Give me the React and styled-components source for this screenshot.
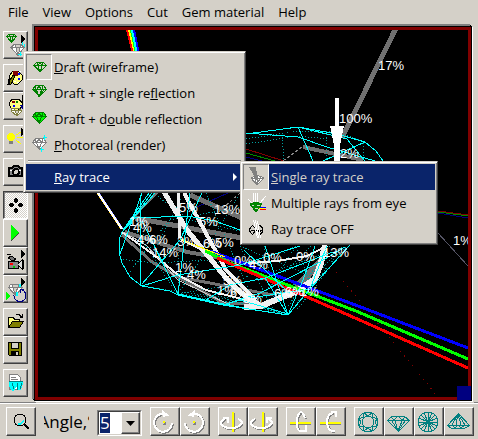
import React, { useState } from "react";
import styled, { createGlobalStyle, css } from "styled-components";

const GlobalStyle = createGlobalStyle`
  * {
    box-sizing: border-box;
  }

  body {
    margin: 0;
    background: #d4d0c8;
    color: #000;
    font-family: "Open Sans", "Noto Sans", sans-serif;
    font-size: 13px;
  }

  button, select {
    font: inherit;
    color: inherit;
  }
`;

const MENUS = ["File", "View", "Options", "Cut", "Gem material", "Help"];

const TOOL_GROUPS = [
  [{ icon: "render", label: "Render mode" }],
  [
    { icon: "palette", label: "Colors" },
    { icon: "gemPalette", label: "Gem colors" },
  ],
  [{ icon: "light", label: "Lighting" }],
  [{ icon: "camera", label: "Snapshot" }],
  [
    { icon: "move", label: "Move", pressed: true },
    { icon: "play", label: "Play" },
    { icon: "video", label: "Record" },
    { icon: "spin", label: "Spin gem" },
  ],
  [
    { icon: "open", label: "Open" },
    { icon: "save", label: "Save" },
  ],
  [{ icon: "report", label: "Report" }],
];

const VIEW_GROUPS = [
  [
    { icon: "turnRight", label: "Rotate clockwise" },
    { icon: "turnLeft", label: "Rotate counterclockwise" },
  ],
  [
    { icon: "yawLeft", label: "Turn left" },
    { icon: "yawRight", label: "Turn right" },
  ],
  [
    { icon: "pitchDown", label: "Tilt down" },
    { icon: "pitchUp", label: "Tilt up" },
  ],
  [
    { icon: "crown", label: "Crown view" },
    { icon: "side", label: "Side view" },
    { icon: "pavilion", label: "Pavilion view" },
    { icon: "sideUp", label: "Inverted side view" },
  ],
];

const LABELS = [
  [378, 70, "17%"],
  [339, 123, "100%"],
  [340, 158, "2%"],
  [453, 245, "1%"],
  [179, 212, "5%"],
  [214, 214, "13%"],
  [199, 226, "5%"],
  [129, 226, "1%"],
  [133, 232, "4%"],
  [137, 244, "4%"],
  [149, 244, "6%"],
  [177, 246, "3%"],
  [203, 248, "6%"],
  [215, 247, "5%"],
  [152, 257, "14%"],
  [175, 272, "1%"],
  [187, 279, "4%"],
  [234, 265, "0%"],
  [249, 269, "4%"],
  [263, 262, "0%"],
  [296, 261, "0%"],
  [323, 257, "13%"],
  [223, 285, "5%"],
  [217, 295, "1%"],
  [230, 297, "6%"],
  [243, 303, "5%"],
  [274, 298, "6%"],
  [285, 296, "6%"],
  [300, 296, "1%"],
];

const ICONS = {
  render: (
    <>
      <g stroke="#008000">
        <path d="M6.5 3.5h6l2 2l-5 6l-5-6zM4.5 5.5h10M7.5 3.5l2 8M11.5 3.5l-2 8" />
      </g>
      <g stroke="#808080">
        <path d="M12 13.5h7l3 3l-6 8l-7-8zM9 16.5h13M13 14l3 10l3-10" fill="#fff" />
      </g>
      <path d="M19 4l4 4l-4 4z" fill="#000" />
      <path d="M20.500 11v3M22.500 13v3M16 23.500h4M18.500 21v4" stroke="#0ff" />
    </>
  ),
  palette: (
    <>
      <path d="M7 17v-5l4-5h5l4 4v5l-4 4h-4l-3-3z" fill="#ffff80" stroke="#000" />
      <path d="M11 7h4v4h-3z" fill="#800000" stroke="#800000" />
      <path d="M6 20l5-9l2 1l-4 8z" fill="#808000" stroke="#000" />
      <path d="M6 15h2v5h-2z" fill="#000" />
      <path d="M16 9h2v2h-2zM16 14h2v2h-2z" fill="#00f" />
      <path d="M17 7.500h2M12 17.500h2M15 18.500h2" stroke="#fff" />
    </>
  ),
  gemPalette: (
    <>
      <path d="M7 12l3-5h7l3 4v4l-4 3h-6z" fill="#ffff80" stroke="#000" />
      <path d="M10 16h7l3 3l-5 5l-6-5zM9 18.500h11M12 16l3 8l3-8" fill="#fff" stroke="#808040" />
      <path d="M10 9h3v2h-3z" fill="#800000" />
      <path d="M14 9h2v2h-2z" fill="#080" />
      <path d="M11 13h2v2h-2z" fill="#00f" />
      <path d="M18 13h5v6z" fill="#000080" stroke="#000080" />
      <path d="M20 3l4 4l-4 4z" fill="#000" />
    </>
  ),
  light: (
    <>
      <circle cx="9" cy="12" r="4" fill="#ff0" />
      <path d="M7 16h4v3h-4z" fill="#808080" />
      <path d="M14 10l5-3M15 12.500h6M14 15l5 4" stroke="#ff0" />
      <path d="M19 3l4 4l-4 4z" fill="#000" />
    </>
  ),
  camera: (
    <>
      <path d="M7 10h3l2-2h4l2 2h2v8h-13z" fill="#888" stroke="#000" strokeWidth="2" />
      <circle cx="14" cy="14" r="3" fill="#d4d0c8" stroke="#000" strokeWidth="2" />
      <path d="M8 12.500h2M17 12.500h2" stroke="#fff" />
    </>
  ),
  move: (
    <g fill="#000">
      <path d="M13 7h2v1h1v3h-1v1h-2v-1h-1v-3h1z" />
      <path d="M13 17h2v1h1v3h-1v1h-2v-1h-1v-3h1z" />
      <path d="M7 13h1v-1h3v1h1v2h-1v1h-3v-1h-1z" />
      <path d="M16 13h1v-1h3v1h1v2h-1v1h-3v-1h-1z" />
    </g>
  ),
  play: (
    <>
      <path d="M9 6l8 8l-8 8z" fill="#0f0" />
      <path d="M17 14l-8 8" stroke="#444" />
    </>
  ),
  video: (
    <>
      <path d="M6.500 14.500h10v7h-10z" fill="#888" stroke="#000" />
      <path d="M6 11l3-2l5 3l-3 2zM5 8l4-1" fill="#777" stroke="#000" />
      <path d="M16 17l4-4v9l-4-4M21.500 13v9" stroke="#000" fill="#ddd" />
      <path d="M8 17h3" stroke="#f00" strokeWidth="2" />
      <path d="M11 20h2" stroke="#0c0" strokeWidth="2" />
      <path d="M19 3l4 4l-4 4z" fill="#000" />
    </>
  ),
  spin: (
    <>
      <path d="M8.500 9.500h9l3 3l-7 8l-7-8zM6 12.500h14M10 9l3 11l4-11" fill="#fff" stroke="#808080" />
      <path d="M4 17l4 4l-4 4z" fill="#0f0" />
      <path d="M20 15a6 6 0 1 1-8 5M18 14.500h4M18.500 14v4" stroke="#000080" />
      <path d="M18 9v3M15 17v4" stroke="#0ff" strokeWidth="2" />
      <path d="M19 3l4 4l-4 4z" fill="#000" />
    </>
  ),
  open: (
    <>
      <path d="M6.500 18.500v-9h5l1 2h5v3" fill="#ffff80" stroke="#000" />
      <path d="M6.500 19.500l4-6h11l-4 6z" fill="#808000" stroke="#000" />
      <path d="M14 6.500h3l3 3M20.500 6v4M18 9.500h3" stroke="#000" />
    </>
  ),
  save: (
    <>
      <path d="M6.500 6.500h13v13h-12l-1-1z" fill="#808000" stroke="#000" />
      <path d="M9.500 6.500h7v6h-7z" fill="#d4d0c8" stroke="#000" />
      <path d="M9 15h8v4h-8z" fill="#000" />
      <path d="M14 16h2v3h-2z" fill="#d4d0c8" />
    </>
  ),
  report: (
    <>
      <path d="M7.500 5.500h8l3 3v12h-11z" fill="#fff" stroke="#808080" />
      <path d="M9 8.500h5M9 10.500h7" stroke="#808080" />
      <path d="M7 12h14v3l-2 6h-3l-1-4l-3 5h-2l-3-5z" fill="#0ff" />
      <path d="M7 12.500h14M10 14l2 6M15 14l1 7M20 14l-2 6" stroke="#008080" />
    </>
  ),
  zoom: (
    <>
      <circle cx="13" cy="11" r="6" fill="#d4d0c8" stroke="#000" />
      <path d="M11 14.500h3l3-3" stroke="#0ff" strokeWidth="2" />
      <path d="M17 15l5 5" stroke="#000" strokeWidth="2" />
    </>
  ),
  turnRight: (
    <>
      <path d="M12 6a9 9 0 1 0 11 9" stroke="#808080" strokeWidth="2" />
      <path d="M11 5a9 9 0 1 0 11 9M9 5h7M12 2l5 4l-4 1" stroke="#fff" strokeWidth="2" />
      <path d="M14 13h2v3h-3v-1h1z" fill="#808080" />
      <path d="M13 12h2v2h-2z" fill="#ff0" />
    </>
  ),
  turnLeft: (
    <>
      <path d="M17 6a9 9 0 1 1-11 9" stroke="#808080" strokeWidth="2" />
      <path d="M16 5a9 9 0 1 1-11 9M18 5h-7M15 2l-5 4l4 1" stroke="#fff" strokeWidth="2" />
      <path d="M14 13h2v3h-3v-1h1z" fill="#808080" />
      <path d="M13 12h2v2h-2z" fill="#ff0" />
    </>
  ),
  yawLeft: (
    <>
      <path d="M8 11q-8 4 0 8q6 3 14-1q5-4 0-7M16 4v19" stroke="#808080" strokeWidth="2" />
      <path d="M15 3v20" stroke="#ff0" strokeWidth="2" />
      <path d="M7 10q-8 4 0 8q7 3 14-1q6-4-1-7M5 9h5v5" stroke="#fff" strokeWidth="2" />
      <path d="M15 3v13" stroke="#ff0" strokeWidth="2" />
    </>
  ),
  yawRight: (
    <>
      <path d="M8 11q-8 4 0 8q6 3 14-1q5-4 0-7M16 4v19" stroke="#808080" strokeWidth="2" />
      <path d="M15 3v20" stroke="#ff0" strokeWidth="2" />
      <path d="M7 10q-8 4 0 8q7 3 14-1q6-4-1-7M24 9h-5v5" stroke="#fff" strokeWidth="2" />
      <path d="M15 3v13" stroke="#ff0" strokeWidth="2" />
    </>
  ),
  pitchDown: (
    <>
      <path d="M4 15h21M20 10q-4-10-8 0v8q2 6 6 4" stroke="#808080" strokeWidth="2" />
      <path d="M4 14h21" stroke="#ff0" strokeWidth="2" />
      <path d="M19 9q-4-12-8 0v9q2 6 6 4M20 16v6h-5" stroke="#fff" strokeWidth="2" />
      <path d="M13 14h12" stroke="#ff0" strokeWidth="2" />
    </>
  ),
  pitchUp: (
    <>
      <path d="M4 15h21M18 5q-6 0-6 10q1 8 7 8" stroke="#808080" strokeWidth="2" />
      <path d="M4 14h21" stroke="#ff0" strokeWidth="2" />
      <path d="M17 4q-6 1-6 10q1 9 8 8M15 3h5v5" stroke="#fff" strokeWidth="2" />
      <path d="M13 14h12" stroke="#ff0" strokeWidth="2" />
    </>
  ),
  crown: (
    <g stroke="#008080">
      <circle cx="14" cy="13" r="10" />
      <circle cx="14" cy="13" r="6" />
      <path d="M10 4l4 3l4-3l1 4l4 2l-2 3l2 4l-4 1l-1 4l-4-3l-4 3l-1-4l-4-1l2-4l-2-3l4-2z" />
    </g>
  ),
  side: (
    <g stroke="#008080">
      <path d="M7.500 7.500h13l5 4l-11 11l-11-11zM3 11.500h22M7 8l4 4l3 10l4-10l3-4M10 11l4-4l4 4M8 12l6 10l7-10" />
    </g>
  ),
  pavilion: (
    <g stroke="#008080">
      <circle cx="14" cy="13" r="10" />
      <path d="M14.500 3v20M4 13.500h20M7 6l14 14M21 6l-14 14M10 4l8 18M18 4l-8 18M5 9l18 8M23 9l-18 8" />
    </g>
  ),
  sideUp: (
    <g stroke="#008080">
      <path d="M14.500 4.500l11 12l-5 3h-13l-4-3zM3 16.500h22M14 5l-6 11M14 5l-2 11M14 5l3 11M14 5l7 11M8 16l3 3l3-3l3 3l4-3" />
    </g>
  ),
  wire: <path d="M9.500 7.500h7l3 3l-6.500 6l-6-6zM7 10.500h12M10 8l3 9l3-9M11 10l2-2l2 2" stroke="#008000" />,
  single: (
    <path
      d="M9.500 5.500h8l3 4l-7 7l-7-7zM6 9.500h14M9 6l4 11l4-11M11 9l2-3l2 3M8 9l5 7l6-7"
      stroke="#008000"
    />
  ),
  double: (
    <>
      <path d="M9.500 6.500h8l3 4l-7 7l-7-7z" fill="#0f0" stroke="#008000" />
      <path d="M6 10.500h14M9 7l4 10l4-10M11 10l2-3l2 3" stroke="#008000" />
    </>
  ),
  photo: (
    <>
      <path d="M9.500 6.500h8l3 4l-7 7l-7-7z" fill="#fff" stroke="#808080" />
      <path d="M6 10.500h14M9 7l4 10l4-10M11 10l2-3l2 3" stroke="#808080" />
      <path d="M17 5.500h4M18.500 3v5M14 17.500h4M15.500 15v5" stroke="#0ff" />
    </>
  ),
  oneRay: (
    <>
      <path d="M7 13l6-3l7 3l-7 7z" fill="#fff" stroke="#808080" />
      <path d="M7 13.500h13M10 12l3 7l4-7M13.500 10v10" stroke="#808080" />
      <path d="M5 2h7l2 15z" fill="#808080" />
    </>
  ),
  manyRays: (
    <>
      <path d="M10.500 3v9M12.500 3v9M14.500 3v9M23 6l-6 7M5 9l4 4" stroke="#fff" />
      <path d="M7 14l6-2l6 2l-6 8z" fill="#080" stroke="#008000" />
      <path d="M9 15.500h2M14 15.500h3M12 18.500h3" stroke="#d4d0c8" />
      <path d="M17 17.500h6" stroke="#00f" />
      <path d="M17 19.500h6" stroke="#f00" />
      <path d="M16 18.500h6" stroke="#ff0" />
    </>
  ),
  noRays: (
    <>
      <path d="M10 9q-7 5 0 10M16 9q8 5 0 10M8 14.500h11M10 10l3 3M10 18l3-4l5 2" stroke="#000" />
      <path d="M10.500 4l4 18M12.500 4l3 18M14.500 5l3 17" stroke="#fff" />
    </>
  ),
};

const Icon = ({ name, x = 0, y = 0, width = 26, height = 26 }) => (
  <Glyph width={width} height={height} viewBox={`${x} ${y} ${width} ${height}`} aria-hidden="true">
    {ICONS[name]}
  </Glyph>
);

const GemScene = () => (
  <Scene viewBox="38 30 430 367" preserveAspectRatio="xMinYMin meet" role="img" aria-label="Gem ray trace">
    <g strokeWidth="2">
      <path d="M127 30L133 54" stroke="#f00" />
      <path d="M129 30L135 54" stroke="#ff0" />
      <path d="M131 30L136 54" stroke="#0f0" />
      <path d="M132 30L137 54" stroke="#0ff" />
      <path d="M134 30L139 54" stroke="#00f" />
    </g>
    <path d="M97 193L121 229" stroke="#fc0" />
    <path d="M99 193L123 229" stroke="#66f" />
    <path d="M98 193L122 229" stroke="#fff" strokeWidth="2" />

    <g>
      <path d="M246 149L284 161M438 211L468 215" stroke="#800000" />
      <path d="M246 153L275 161M438 212L468 216" stroke="#080" />
      <path d="M246 157L262 161M438 213L468 218" stroke="#000080" />
      <path d="M438 233L468 266" stroke="#556" />
      <path d="M336 272L438 397" stroke="#800000" strokeDasharray="1 5" />
      <path d="M302 147L283 161M240 193L215 215" stroke="#888" strokeDasharray="3 2" />
      <path d="M190 210L228 193" stroke="#000080" />
    </g>

    <g stroke="#707070" strokeWidth="5">
      <path d="M396 28L342 138" />
      <path d="M303 147L363 160" strokeWidth="4" />
      <path d="M190 195L242 218M135 218L242 238" />
      <path d="M125 232L187 252L240 261" strokeWidth="4" />
      <path d="M178 277L273 295" strokeWidth="3" />
      <path d="M122 235L152 262L223 303L262 304" strokeWidth="3" />
      <path d="M297 287L322 260" strokeWidth="7" />
      <path d="M125 228L144 206L157 193" strokeWidth="2" />
    </g>

    <g stroke="#00a0a0" strokeDasharray="1 2">
      <path d="M246 139L298 131L337 132L362 141M246 144L298 136L328 139M282 137L284 161M327 134L326 161M364 143L363 161" />
      <path d="M120 259L155 263L209 260L262 275L330 252M135 218L153 253L184 193M153 193L190 220L240 231M177 295L195 268L240 193" />
      <path d="M223 304L251 272L296 246L312 286M178 295L178 193M206 193L256 307L296 246M240 246L274 311M330 246L284 312M311 246L249 308M342 247L303 289" />
      <path d="M128 274L169 220L240 207M180 238L265 280L305 297M144 286L180 292L240 299L288 314" />
      <path d="M264 246L274 297L325 265M240 246L320 280M137 232L177 294L230 285" />
      <path d="M180 294L226 299L280 313M190 297L240 303L285 314M340 252L292 309M346 247L296 311" />
    </g>

    <g stroke="#f0f0f0">
      <path d="M164 192L187 230L226 278L257 308" strokeWidth="5" />
      <path d="M184 193L226 270L256 300" strokeWidth="4" />
      <path d="M178 193L180 238" strokeWidth="3" />
      <path d="M122 232L154 255L178 275L206 290L250 301" strokeWidth="2" />
      <path d="M123 232L146 245L178 280L230 305" stroke="#ccc" />
      <path d="M244 307L261 306L297 291L315 279L321 263L325 245" strokeWidth="6" />
      <path d="M260 304L240 291L226 278" strokeWidth="3" />
      <path d="M240 264L277 261L307 256L327 246" strokeWidth="2" />
      <path d="M180 239L210 254L235 266" strokeWidth="2" />
    </g>

    <g strokeWidth="3">
      <path d="M210 251L240 262L366 309L468 348" stroke="#00f" />
      <path d="M205 251L230 263L356 311L468 359" stroke="#0f0" />
      <path d="M217 258L337 310L468 368" stroke="#f00" />
    </g>
    <path d="M180 239L225 257" stroke="#ff0" />

    <g stroke="#0ff">
      <path d="M122 232L119 240V252L122 263L130 277L142 286L170 291L178 295L223 305L288 315L310 289L350 245" />
      <path d="M122 232L152 193M123 230L149 193M124 229L155 193M122 232L135 218L187 216L215 221L240 230" />
      <path d="M140 193L141 285M142 284L180 240L202 193M178 295L190 193M142 286L178 275L240 265L300 246" />
      <path d="M120 254L142 193M223 305L260 293L318 263L345 247M288 315L265 246M288 315L303 280L315 246" />
      <path d="M244 250L290 294M142 221L178 294L223 304M250 298L310 289L327 246M178 295L249 309M260 280L333 252" />
      <path d="M246 134L298 127L337 134L365 142L376 151L383 161M246 133L298 137L327 147L375 161M298 127L313 161M365 142L323 161M298 127L347 139L365 161" />
      <path d="M206 300L230 285L265 278L288 315M288 314L240 300L223 305" />
    </g>

    <path d="M337 98V126" stroke="#fff" strokeWidth="4" />
    <path d="M330 126H344L340 145V161H334V145Z" fill="#fff" />

    {LABELS.map(([x, y, text]) => (
      <RayLabel key={`${x}-${y}`} x={x} y={y}>
        {text}
      </RayLabel>
    ))}
  </Scene>
);

const App = () => {
  const [angle, setAngle] = useState("5");

  return (
    <Window>
      <GlobalStyle />
      <MenuBar>
        {MENUS.map((name) => (
          <MenuTitle key={name} type="button">
            {name}
          </MenuTitle>
        ))}
      </MenuBar>

      <Workspace>
        <SideBar>
          {TOOL_GROUPS.map((group) => (
            <SideGroup key={group[0].icon}>
              {group.map((tool) => (
                <ToolButton key={tool.icon} type="button" aria-label={tool.label} $pressed={tool.pressed}>
                  <Icon name={tool.icon} x={2} y={1} />
                </ToolButton>
              ))}
            </SideGroup>
          ))}
        </SideBar>
        <Viewport>
          <GemScene />
          <Corner />
        </Viewport>
      </Workspace>

      <BottomBar>
        <ViewButton type="button" aria-label="Zoom">
          <Icon name="zoom" width={28} />
        </ViewButton>
        <AngleLabel htmlFor="angle">Angle,°</AngleLabel>
        <Combo>
          <AngleSelect id="angle" value={angle} onChange={(event) => setAngle(event.target.value)}>
            <option>1</option>
            <option>5</option>
            <option>15</option>
          </AngleSelect>
          <ComboArrow>
            <svg width="9" height="5" viewBox="0 0 9 5">
              <path d="M0 0h9l-4.500 5z" />
            </svg>
          </ComboArrow>
        </Combo>
        {VIEW_GROUPS.map((group) => (
          <ViewGroup key={group[0].icon}>
            {group.map((view) => (
              <ViewButton key={view.icon} type="button" aria-label={view.label}>
                <Icon name={view.icon} x={1} width={28} />
              </ViewButton>
            ))}
          </ViewGroup>
        ))}
      </BottomBar>

      <RenderMenu role="menu">
        <MenuItem type="button" role="menuitem">
          <IconCell $checked>
            <Icon name="wire" width={24} height={24} />
          </IconCell>
          <span><u>D</u>raft (wireframe)</span>
        </MenuItem>
        <MenuItem type="button" role="menuitem">
          <IconCell>
            <Icon name="single" />
          </IconCell>
          <span>Draft + single re<u>f</u>lection</span>
        </MenuItem>
        <MenuItem type="button" role="menuitem">
          <IconCell>
            <Icon name="double" />
          </IconCell>
          <span>Draft + d<u>o</u>uble reflection</span>
        </MenuItem>
        <MenuItem type="button" role="menuitem">
          <IconCell>
            <Icon name="photo" />
          </IconCell>
          <span><u>P</u>hotoreal (render)</span>
        </MenuItem>
        <Separator />
        <MenuItem type="button" role="menuitem" $active>
          <IconCell />
          <span><u>R</u>ay trace</span>
          <SubArrow width="4" height="8" viewBox="0 0 4 8">
            <path d="M0 0l4 4l-4 4z" fill="#fff" />
          </SubArrow>
        </MenuItem>
      </RenderMenu>

      <TraceMenu role="menu">
        <MenuItem type="button" role="menuitem" $active>
          <IconCell $checked>
            <Icon name="oneRay" width={24} height={24} />
          </IconCell>
          <Dimmed><u>S</u>ingle ray trace</Dimmed>
        </MenuItem>
        <MenuItem type="button" role="menuitem">
          <IconCell>
            <Icon name="manyRays" />
          </IconCell>
          <span>Multiple rays from eye</span>
        </MenuItem>
        <MenuItem type="button" role="menuitem">
          <IconCell>
            <Icon name="noRays" />
          </IconCell>
          <span>Ray trace OFF</span>
        </MenuItem>
      </TraceMenu>
    </Window>
  );
};

const raised = css`
  border: 1px solid;
  border-color: #fff #404040 #404040 #fff;
  box-shadow: inset -1px -1px #808080;
`;

const Window = styled.div`
  position: relative;
  display: flex;
  flex-direction: column;
  min-height: 100vh;
  overflow: hidden;
`;

const MenuBar = styled.nav`
  display: flex;
  height: 23px;
  padding-left: 1px;
`;

const MenuTitle = styled.button`
  border: 0;
  padding: 0 7px;
  background: none;
  line-height: 20px;
  white-space: nowrap;
`;

const Workspace = styled.div`
  flex: 1;
  display: flex;
  padding-right: 4px;
  border-bottom: 1px solid #808080;
`;

const SideBar = styled.div`
  display: flex;
  flex-direction: column;
  gap: 5px;
  width: 32px;
  padding: 8px 3px 5px;
`;

const SideGroup = styled.div`
  display: flex;
  flex-direction: column;
`;

const ToolButton = styled.button`
  ${raised}
  display: block;
  width: 25px;
  height: 28px;
  padding: 0;
  overflow: hidden;
  background: #d4d0c8;

  ${({ $pressed }) =>
    $pressed &&
    css`
      border-color: #404040 #fff #fff #404040;
      box-shadow: inset 1px 1px #808080;
      background: repeating-conic-gradient(#fff 0 25%, #d4d0c8 0 50%) 0 0 / 2px 2px;
    `}
`;

const Glyph = styled.svg`
  display: block;
  flex: none;
  fill: none;
  shape-rendering: crispEdges;
`;

const Viewport = styled.main`
  position: relative;
  flex: 1;
  display: flex;
  border: 3px solid #800000;
  background: #000;
  margin: 4px 3px 2px 3px;
  box-shadow: 0 0 0 1px #000, -2px -2px 0 1px #808080, -1px -1px 0 1px #000, 1px 1px 0 1px #fff,
    2px 2px 0 1px #d4d0c8;
`;

const Scene = styled.svg`
  flex: 1;
  width: 100%;
  min-width: 0;
  fill: none;
  shape-rendering: crispEdges;
`;

const RayLabel = styled.text`
  fill: #fff;
  font-family: "Liberation Sans", Arial, sans-serif;
  font-size: 13px;
`;

const Corner = styled.div`
  position: absolute;
  right: -3px;
  bottom: -3px;
  width: 14px;
  height: 14px;
  background: #000080;
`;

const BottomBar = styled.footer`
  display: flex;
  align-items: flex-start;
  gap: 8px;
  padding: 3px 4px 3px 6px;
  border-top: 1px solid #fff;
`;

const ViewGroup = styled.div`
  display: flex;
`;

const ViewButton = styled.button`
  ${raised}
  width: 30px;
  height: 29px;
  padding: 0;
  background: #d4d0c8;
`;

const AngleLabel = styled.label`
  display: flex;
  justify-content: center;
  width: 45px;
  overflow: hidden;
  font-size: 17px;
  line-height: 30px;
  white-space: nowrap;
`;

const Combo = styled.div`
  position: relative;
  width: 45px;
  height: 26px;
  margin-top: 3px;
  border: 1px solid;
  border-color: #808080 #fff #fff #808080;
`;

const AngleSelect = styled.select`
  appearance: none;
  display: block;
  width: 100%;
  height: 24px;
  padding: 0 1px;
  border: 1px solid;
  border-color: #404040 #d4d0c8 #d4d0c8 #404040;
  border-radius: 0;
  background: linear-gradient(#0a246a, #0a246a) 1px 1px / 10px 20px no-repeat #fff;
  color: #fff;
  font-size: 17px;
  line-height: 20px;
`;

const ComboArrow = styled.span`
  ${raised}
  position: absolute;
  top: 1px;
  right: 1px;
  bottom: 1px;
  width: 19px;
  display: flex;
  align-items: center;
  justify-content: center;
  background: #d4d0c8;
  pointer-events: none;
`;

const Menu = styled.div`
  position: absolute;
  padding: 2px;
  border: 1px solid;
  border-color: #d4d0c8 #404040 #404040 #d4d0c8;
  box-shadow: inset 1px 1px #fff, inset -1px -1px #808080;
  background: #d4d0c8;
`;

const RenderMenu = styled(Menu)`
  top: 51px;
  left: 23px;
  width: 223px;
`;

const TraceMenu = styled(Menu)`
  top: 161px;
  left: 240px;
  width: 198px;
`;

const MenuItem = styled.button`
  display: flex;
  align-items: center;
  gap: 2px;
  width: 100%;
  height: 26px;
  padding: 0;
  border: 0;
  background: ${({ $active }) => ($active ? "#0a246a" : "none")};
  color: ${({ $active }) => ($active ? "#fff" : "#000")};
  text-align: left;
  white-space: nowrap;
`;

const IconCell = styled.span`
  display: flex;
  flex: none;
  width: 26px;
  height: 26px;
  overflow: hidden;

  ${({ $checked }) =>
    $checked &&
    css`
      border: 1px solid;
      border-color: #808080 #fff #fff #808080;
      background: #d4d0c8;
    `}
`;

const Dimmed = styled.span`
  color: #d4d0c8;
`;

const SubArrow = styled.svg`
  margin-left: auto;
  margin-right: 6px;
`;

const Separator = styled.hr`
  margin: 2px;
  border: 0;
  border-top: 1px solid #808080;
  border-bottom: 1px solid #fff;
`;

export default App;
